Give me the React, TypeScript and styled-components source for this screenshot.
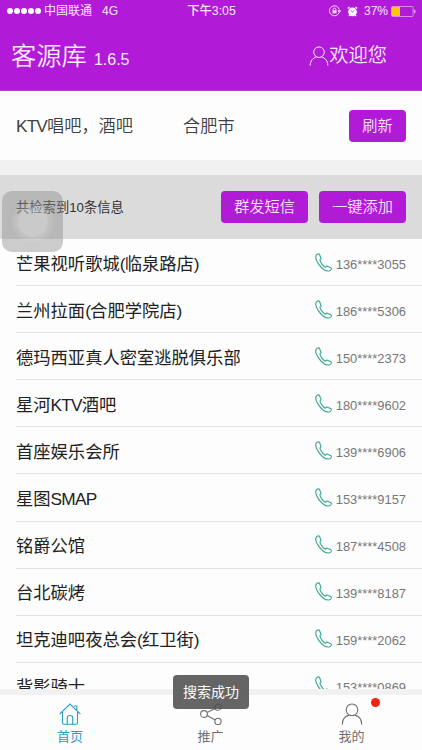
import React from 'react';
import styled, { createGlobalStyle } from 'styled-components';

const PURPLE = '#b11bd8';

const GlobalStyle = createGlobalStyle`
  * { box-sizing: border-box; }
  body {
    margin: 0;
    background: #fdfdfd;
    font-family: "Liberation Sans", "Noto Sans CJK SC", sans-serif;
    overflow: hidden;
  }
`;

const Screen = styled.div`
  position: relative;
  width: 422px;
  height: 750px;
  display: flex;
  flex-direction: column;
  overflow: hidden;
  background: #fdfdfd;
`;

const Header = styled.header`
  flex: none;
  height: 91px;
  background: ${PURPLE};
  color: #fbe9ff;
  border-bottom: 1px solid #b545cf;
`;

const StatusBar = styled.div`
  display: grid;
  grid-template-columns: 1fr auto 1fr;
  align-items: center;
  height: 22px;
  padding: 0 6px 0 7px;
  font-size: 12px;
  line-height: 22px;
`;

const Carrier = styled.div`
  display: flex;
  align-items: center;
`;

const Dot = styled.i`
  width: 6px;
  height: 6px;
  margin-right: 1px;
  border-radius: 50%;
  background: #fff;
`;

const CarrierName = styled.span`
  margin: 0 10px 0 2px;
`;

const Clock = styled.span`
  font-size: 12.3px;
  font-weight: 500;
`;

const Indicators = styled.div`
  display: flex;
  justify-content: flex-end;
  align-items: center;
`;

const Percent = styled.span`
  margin: 0 3px 0 6px;
`;

const TitleRow = styled.div`
  display: flex;
  justify-content: space-between;
  height: 68px;
  padding: 0 35px 0 11px;
`;

const Title = styled.h1`
  margin: 0;
  font-size: 25.3px;
  font-weight: 350;
  line-height: 69px;
`;

const Version = styled.small`
  margin-left: 7px;
  font-size: 16px;
`;

const Welcome = styled.div`
  display: flex;
  align-items: center;
  font-size: 19.3px;
  font-weight: 350;
  line-height: 70px;
`;

const Filters = styled.section`
  flex: none;
  display: flex;
  align-items: center;
  height: 69px;
  padding: 0 16px;
  color: #404040;
  font-size: 17.2px;
  font-weight: 350;
`;

const Category = styled.span`
  width: 167px;
  padding-bottom: 2px;
`;

const City = styled.span`
  flex: 1;
  padding-bottom: 2px;
`;

const Button = styled.button<{ $width: number }>`
  width: ${(p) => p.$width}px;
  height: 32px;
  padding: 0;
  border: 0;
  border-radius: 4px;
  background: ${PURPLE};
  color: #fce6ff;
  font: 350 15.2px/32px "Liberation Sans", "Noto Sans CJK SC", sans-serif;
`;

const Gap = styled.div<{ $height: number }>`
  flex: none;
  height: ${(p) => p.$height}px;
  background: #f1f1f1;
`;

const Summary = styled.section`
  flex: none;
  display: flex;
  align-items: center;
  gap: 11px;
  height: 64px;
  padding: 0 16px;
  background: #dbdbdb;
`;

const Count = styled.span`
  flex: 1;
  color: #303030;
  font-size: 13.3px;
  padding-bottom: 1px;
`;

const List = styled.ul`
  flex: 1;
  min-height: 0;
  margin: 0;
  padding: 0 0 0 16px;
  overflow: hidden;
  list-style: none;
`;

const Row = styled.li`
  display: flex;
  align-items: center;
  height: 47.1px;
  padding: 3px 16px 0 0;
  border-bottom: 1px solid #e3e3e3;
`;

const Name = styled.span`
  flex: 1;
  color: #222;
  font-size: 17.3px;
  line-height: 46px;
`;

const Latin = styled.span`
  letter-spacing: -0.8px;
`;

const Phone = styled.span`
  color: #777;
  font-size: 12.9px;
  padding-top: 1px;
  margin-left: 4px;
`;

const Tabs = styled.nav`
  flex: none;
  display: grid;
  grid-template-columns: 140px 141px 141px;
  height: 55px;
`;

const Tab = styled.a<{ $active?: boolean }>`
  position: relative;
  display: flex;
  flex-direction: column;
  align-items: center;
  padding-top: 8px;
  color: ${(p) => (p.$active ? '#2c9dbf' : '#707070')};
  font-size: 13px;
  line-height: 19px;
`;

const TabLabel = styled.span`
  margin-top: 2px;
`;

const Badge = styled.i`
  position: absolute;
  top: 3px;
  left: 90px;
  width: 9px;
  height: 9px;
  border-radius: 50%;
  background: #ee2410;
`;

const Toast = styled.div`
  position: absolute;
  top: 675px;
  left: 173px;
  width: 76px;
  height: 34px;
  border-radius: 4px;
  background: rgba(80, 80, 80, 0.88);
  color: #fff;
  font-size: 14px;
  line-height: 35px;
  text-align: center;
`;

const AssistiveTouch = styled.div`
  position: absolute;
  top: 191px;
  left: 2px;
  display: grid;
  place-items: center;
  width: 61px;
  height: 61px;
  border-radius: 10px;
  background: rgba(140, 140, 140, 0.43);
`;

const TouchRing = styled.div`
  display: grid;
  place-items: center;
  width: 42px;
  height: 42px;
  border-radius: 50%;
  background: rgba(255, 255, 255, 0.07);
`;

const TouchDot = styled.div`
  width: 30px;
  height: 30px;
  border-radius: 50%;
  background: rgba(255, 255, 255, 0.2);
  box-shadow: 0 0 0 3px rgba(255, 255, 255, 0.07);
`;

const PersonIcon = ({ size = 22 }: { size?: number }) => (
  <svg width={size} height={size} viewBox="0 0 22 22" fill="none" stroke="currentColor" strokeWidth="1.1">
    <circle cx="11" cy="6.8" r="5.8" />
    <path d="M1.3 21.5c0-5.5 3.2-8.4 6.8-9.4M13.9 12.1c3.6 1 6.8 3.9 6.8 9.4" />
  </svg>
);

const HomeIcon = () => (
  <svg width="22" height="22" viewBox="0 0 22 22" fill="none" stroke="currentColor" strokeWidth="1.1">
    <path d="M.6 11.2 11 1l10.4 10.2M3.5 9v10.8q0 1.5 1.5 1.5h12q1.5 0 1.5-1.5V9M8.3 21.3v-6.8q0-2 2.7-2t2.7 2v6.8M14.8 3h3v4" />
  </svg>
);

const ShareIcon = () => (
  <svg width="22" height="22" viewBox="0 0 22 22" fill="none" stroke="currentColor" strokeWidth="1.1">
    <circle cx="4" cy="11" r="3.4" />
    <circle cx="18" cy="4.2" r="3.1" />
    <circle cx="18" cy="18.4" r="3.1" />
    <path d="m7 9.5 8.2-4M7 12.5l8.2 4.5" />
  </svg>
);

const PhoneIcon = () => (
  <svg width="17" height="19" viewBox="0 0 17 19" fill="none" stroke="#3ca793" strokeWidth="1.15" strokeLinejoin="round">
    <path d="M2.2 1.3C.2 2.7.4 6.3 3.3 10.6c3.3 4.9 7.7 7.7 10.9 7.3 1.2-.2 2-.9 2.2-1.9.1-.7-.3-1.1-.9-1.4l-3.1-1.4c-.9-.4-1.5.2-1.9 1-1.8-.3-5.3-4.8-5.6-7.2.8-.5 1.2-1 1-1.8L4.6 1.6c-.5-1-1.4-1-2.4-.3Z" />
  </svg>
);

const LockIcon = () => (
  <svg width="12" height="12" viewBox="0 0 12 12" fill="none" stroke="#fbe9ff" strokeWidth=".9">
    <path d="M10.2 7.4A5 5 0 1 1 10.3 4.5M9 5.7h2.6l-1.3 1.7Z" />
    <path d="M4.1 5.6V4.2q0-1.2 1.4-1.2t1.4 1.2v1.4" strokeWidth=".8" />
    <rect x="3.5" y="5.3" width="4" height="3" fill="#fbe9ff" stroke="none" />
  </svg>
);

const AlarmIcon = () => (
  <svg width="11" height="11" viewBox="0 0 11 11">
    <circle cx="5.5" cy="5.8" r="4.4" fill="#fff" />
    <path d="M.8 2.5 2.5.9M10.2 2.5 8.5.9M2.6 9.2l-.7.9M8.4 9.2l.7.9" stroke="#fff" strokeWidth="1.3" />
    <path d="M3.8 4.4 5.5 6l2-1.8" stroke={PURPLE} strokeWidth=".8" fill="none" />
  </svg>
);

const BatteryIcon = () => (
  <svg width="25" height="11" viewBox="0 0 25 11">
    <rect x=".5" y=".5" width="21.6" height="10" rx="1" fill="none" stroke="#d58be5" />
    <rect x="1" y="1" width="8" height="9" fill="#fcc70b" />
    <path d="M23 3.5q1.5 0 1.5 2t-1.5 2Z" fill="#e4aff0" />
  </svg>
);

const IconSlot = styled.span<{ $left?: number; $lift?: number }>`
  display: flex;
  margin-left: ${(p) => p.$left ?? 0}px;
  padding-bottom: ${(p) => p.$lift ?? 0}px;
`;

const contacts = [
  ['芒果视听歌城(临泉路店)', '136****3055'],
  ['兰州拉面(合肥学院店)', '186****5306'],
  ['德玛西亚真人密室逃脱俱乐部', '150****2373'],
  ['星河KTV酒吧', '180****9602'],
  ['首座娱乐会所', '139****6906'],
  ['星图SMAP', '153****9157'],
  ['铭爵公馆', '187****4508'],
  ['台北碳烤', '139****8187'],
  ['坦克迪吧夜总会(红卫街)', '159****2062'],
  ['背影骑士', '153****0869'],
];

/* Tightens Latin letters and brackets set among Chinese characters. */
const mixed = (text: string) =>
  text.split(/([A-Z()]+)/).map((part, i) => (i % 2 ? <Latin key={i}>{part}</Latin> : part));

export default function App() {
  return (
    <Screen>
      <GlobalStyle />
      <Header>
        <StatusBar>
          <Carrier>
            {[0, 1, 2, 3, 4].map((n) => <Dot key={n} />)}
            <CarrierName>中国联通</CarrierName>
            <span>4G</span>
          </Carrier>
          <Clock>下午3:05</Clock>
          <Indicators>
            <LockIcon />
            <IconSlot $left={6}><AlarmIcon /></IconSlot>
            <Percent>37%</Percent>
            <BatteryIcon />
          </Indicators>
        </StatusBar>
        <TitleRow>
          <Title>客源库<Version>1.6.5</Version></Title>
          <Welcome>
            <PersonIcon size={20} />
            <span>欢迎您</span>
          </Welcome>
        </TitleRow>
      </Header>
      <Filters>
        <Category>{mixed('KTV唱吧，酒吧')}</Category>
        <City>合肥市</City>
        <Button $width={57}>刷新</Button>
      </Filters>
      <Gap $height={15} />
      <Summary>
        <Count>共检索到10条信息</Count>
        <Button $width={87}>群发短信</Button>
        <Button $width={87}>一键添加</Button>
      </Summary>
      <List>
        {contacts.map(([name, phone]) => (
          <Row key={name}>
            <Name>{mixed(name)}</Name>
            <IconSlot $lift={3}><PhoneIcon /></IconSlot>
            <Phone>{phone}</Phone>
          </Row>
        ))}
      </List>
      <Gap $height={6} />
      <Tabs>
        <Tab $active><HomeIcon /><TabLabel>首页</TabLabel></Tab>
        <Tab><ShareIcon /><TabLabel>推广</TabLabel></Tab>
        <Tab><PersonIcon size={22} /><TabLabel>我的</TabLabel><Badge /></Tab>
      </Tabs>
      <AssistiveTouch>
        <TouchRing><TouchDot /></TouchRing>
      </AssistiveTouch>
      <Toast>搜索成功</Toast>
    </Screen>
  );
}
